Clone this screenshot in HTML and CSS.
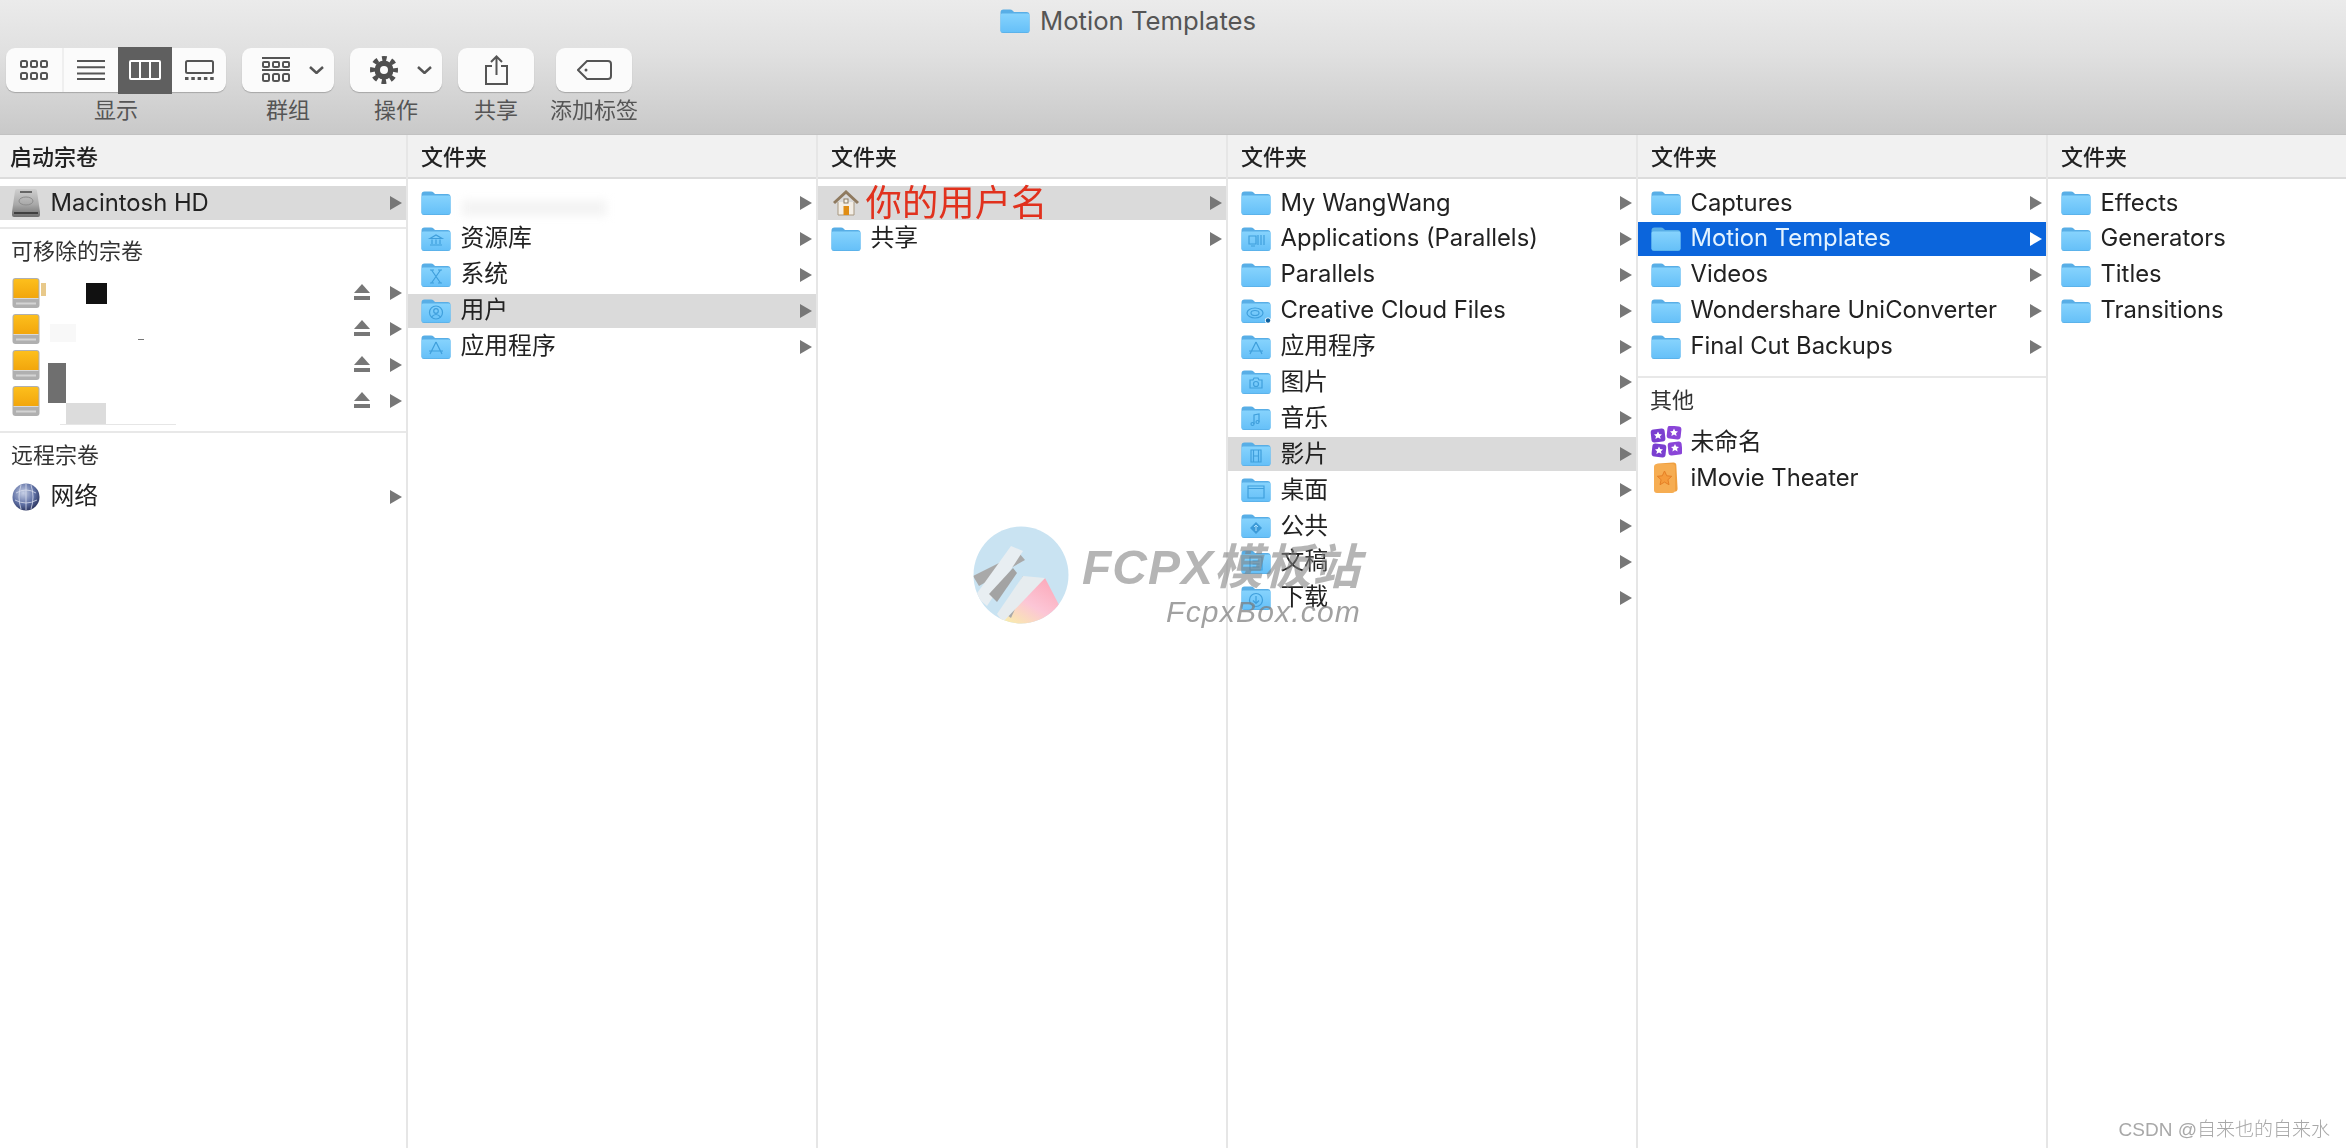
FILE: index.html
```html
<!DOCTYPE html>
<html lang="zh-CN">
<head>
<meta charset="utf-8">
<title>Motion Templates</title>
<link rel="stylesheet" href="styles.css">
</head>
<body>
<svg class="defs" width="0" height="0" aria-hidden="true">
  <defs>
    <linearGradient id="fg" x1="0" y1="0" x2="0" y2="1"><stop offset="0" stop-color="#86d3fd"/><stop offset="1" stop-color="#66c0f8"/></linearGradient>
    <linearGradient id="dg" x1="0" y1="0" x2="0" y2="1"><stop offset="0" stop-color="#fdbf1c"/><stop offset="1" stop-color="#f2a60c"/></linearGradient>
    <linearGradient id="hg" x1="0" y1="0" x2="0" y2="1"><stop offset="0" stop-color="#cfcfcf"/><stop offset=".55" stop-color="#a9a9a9"/><stop offset="1" stop-color="#6d6d6d"/></linearGradient>
    <linearGradient id="wg" x1="1" y1="0" x2="0" y2="1"><stop offset="0" stop-color="#fb9fb0"/><stop offset=".55" stop-color="#fcc6d6"/><stop offset="1" stop-color="#f8f6a0"/></linearGradient>
    <radialGradient id="gl" cx=".4" cy=".35" r=".7"><stop offset="0" stop-color="#c6cfe6"/><stop offset=".6" stop-color="#5f70a4"/><stop offset="1" stop-color="#27305a"/></radialGradient>
    <symbol id="folder" viewBox="0 0 30 24">
      <path d="M.5 3.5Q.5.5 3.5.5H10q1.600 0 2.800 1.300L14 3H26.500Q29.500 3 29.500 6V21.500Q29.500 24 27 24H3Q.5 24 .5 21.500Z" fill="#58aee6"/>
      <path d="M.5 6Q.5 4.500 2 4.500H28Q29.500 4.500 29.500 6V21.200Q29.500 23.200 27.500 23.200H2.500Q.5 23.200.5 21.200Z" fill="url(#fg)"/>
    </symbol>
    <symbol id="arrow" viewBox="0 0 12 14"><path d="M0 0L12 7L0 14Z"/></symbol>
    <symbol id="eject" viewBox="0 0 16 18"><path d="M8 0L16 9H0Z"/><rect y="12" width="16" height="4"/></symbol>
    <symbol id="drive" viewBox="0 0 28 30">
      <path d="M.5 3Q.5 0 3.500 0H24.500Q27.500 0 27.500 3V27Q27.500 30 24.500 30H3.500Q.5 30 .5 27Z" fill="#b0b0b0"/>
      <path d="M1.500 3Q1.500 1 3.500 1H24.500Q26.500 1 26.500 3V20H1.500Z" fill="url(#dg)"/>
      <path d="M1.500 20H26.500V21H1.500Z" fill="#d9d9d9"/>
      <path d="M4 25.500H24" stroke="#d4d4d4" stroke-width="2"/>
    </symbol>
  </defs>
</svg>

<div class="window">
  <header class="toolbar">
    <div class="title">
      <svg class="ico-folder"><use href="#folder"/></svg>
      <span>Motion Templates</span>
    </div>
    <div class="tools">
      <div class="tool">
        <div class="seg-group">
          <span class="seg">
            <svg width="28" height="20" viewBox="0 0 28 20" fill="none" stroke="#555" stroke-width="2"><rect x="1" y="1" width="6" height="6" rx="1.500"/><rect x="11" y="1" width="6" height="6" rx="1.500"/><rect x="21" y="1" width="6" height="6" rx="1.500"/><rect x="1" y="13" width="6" height="6" rx="1.500"/><rect x="11" y="13" width="6" height="6" rx="1.500"/><rect x="21" y="13" width="6" height="6" rx="1.500"/></svg>
          </span>
          <span class="seg">
            <svg width="28" height="20" viewBox="0 0 28 20" fill="none" stroke="#555" stroke-width="2"><path d="M0 1H28M0 7.300H28M0 13.600H28M0 19H28"/></svg>
          </span>
          <span class="seg seg-active">
            <svg width="32" height="20" viewBox="0 0 32 20" fill="none" stroke="#fff" stroke-width="2"><rect x="1" y="1" width="30" height="18" rx="1"/><path d="M11 1V19M21 1V19"/></svg>
          </span>
          <span class="seg">
            <svg width="29" height="20" viewBox="0 0 29 20" fill="none" stroke="#555" stroke-width="2"><rect x="1" y="1" width="27" height="12" rx="1.500"/><path d="M0 18.500H29" stroke-width="3" stroke-dasharray="3.500 2.800"/></svg>
          </span>
        </div>
        <span class="tool-label">显示</span>
      </div>
      <div class="tool">
        <div class="btn btn-menu">
          <svg width="28" height="26" viewBox="0 0 28 26" fill="none" stroke="#555" stroke-width="2"><path d="M0 1H28M0 13H28"/><rect x="1" y="5" width="6" height="5" rx="1"/><rect x="11" y="5" width="6" height="5" rx="1"/><rect x="21" y="5" width="6" height="5" rx="1"/><rect x="1" y="17" width="6" height="7" rx="1.500"/><rect x="11" y="17" width="6" height="7" rx="1.500"/><rect x="21" y="17" width="6" height="7" rx="1.500"/></svg>
          <svg width="15" height="8" viewBox="0 0 15 8" fill="none" stroke="#555" stroke-width="2.500"><path d="M1 1L7.500 7L14 1"/></svg>
        </div>
        <span class="tool-label">群组</span>
      </div>
      <div class="tool">
        <div class="btn btn-menu">
          <svg width="28" height="28" viewBox="0 0 28 28"><circle cx="14" cy="14" r="9.500" fill="#4f4f4f"/><circle cx="14" cy="14" r="11.500" fill="none" stroke="#4f4f4f" stroke-width="5" stroke-dasharray="4.600 4.430" stroke-dashoffset="2.300"/><circle cx="14" cy="14" r="4" fill="#fbfbfb"/></svg>
          <svg width="15" height="8" viewBox="0 0 15 8" fill="none" stroke="#555" stroke-width="2.500"><path d="M1 1L7.500 7L14 1"/></svg>
        </div>
        <span class="tool-label">操作</span>
      </div>
      <div class="tool">
        <div class="btn btn-single">
          <svg width="23" height="30" viewBox="0 0 23 30" fill="none" stroke="#555" stroke-width="2"><path d="M7 11H1V29H22V11H16M11.500 20V1.500M6 7L11.500 1.500L17 7"/></svg>
        </div>
        <span class="tool-label">共享</span>
      </div>
      <div class="tool">
        <div class="btn btn-single">
          <svg width="35" height="20" viewBox="0 0 35 20" fill="none" stroke="#555" stroke-width="2"><path d="M10 1H31Q34 1 34 4V16Q34 19 31 19H10L1 10Z"/><circle cx="9" cy="10" r="1.500" fill="#555" stroke="none"/></svg>
        </div>
        <span class="tool-label">添加标签</span>
      </div>
    </div>
  </header>

  <main class="columns">
    <section class="col col-first">
      <div class="col-head">启动宗卷</div>
      <div class="col-body">
        <div class="group group-top">
          <div class="row row-sel">
            <svg class="ico" width="28" height="28" viewBox="0 0 28 28"><path d="M3 2Q3 0 5 0H23Q25 0 25 2L28 23V26Q28 28 26 28H2Q0 28 0 26V23Z" fill="url(#hg)"/><rect x="8" y="2" width="12" height="2" fill="#666"/><ellipse cx="14" cy="12" rx="7" ry="4" fill="none" stroke="#8c8c8c"/><path d="M2 24H26" stroke="#3f3f3f" stroke-width="2"/></svg>
            <span class="name">Macintosh HD</span>
            <svg class="arrow"><use href="#arrow"/></svg>
          </div>
        </div>
        <div class="group group-rule">
          <h3 class="group-title">可移除的宗卷</h3>
          <div class="row row-fixed">
            <svg class="ico drive"><use href="#drive"/></svg>
            <span class="name"></span>
            <i class="mask mask-tag"></i><i class="mask mask-black"></i>
            <svg class="eject"><use href="#eject"/></svg>
            <svg class="arrow"><use href="#arrow"/></svg>
          </div>
          <div class="row row-fixed">
            <svg class="ico drive"><use href="#drive"/></svg>
            <span class="name"></span>
            <i class="mask mask-faint"></i><i class="mask mask-dash"></i>
            <svg class="eject"><use href="#eject"/></svg>
            <svg class="arrow"><use href="#arrow"/></svg>
          </div>
          <div class="row row-fixed">
            <svg class="ico drive"><use href="#drive"/></svg>
            <span class="name"></span>
            <i class="mask mask-grey"></i>
            <svg class="eject"><use href="#eject"/></svg>
            <svg class="arrow"><use href="#arrow"/></svg>
          </div>
          <div class="row row-fixed">
            <svg class="ico drive"><use href="#drive"/></svg>
            <span class="name"></span>
            <i class="mask mask-light"></i><i class="mask mask-line"></i>
            <svg class="eject"><use href="#eject"/></svg>
            <svg class="arrow"><use href="#arrow"/></svg>
          </div>
        </div>
        <div class="group group-rule group-last">
          <h3 class="group-title">远程宗卷</h3>
          <div class="row">
            <svg class="ico" width="28" height="28" viewBox="0 0 28 28"><circle cx="14" cy="14" r="13.500" fill="url(#gl)"/><path d="M4 10Q14 4 24 10M3 17Q14 23 25 17M14 1V27M9 2Q5 14 9 26M19 2Q23 14 19 26" fill="none" stroke="#d7dcec" stroke-width=".8"/></svg>
            <span class="name">网络</span>
            <svg class="arrow"><use href="#arrow"/></svg>
          </div>
        </div>
      </div>
    </section>

    <section class="col">
      <div class="col-head">文件夹</div>
      <div class="col-body">
        <div class="row">
          <svg class="ico-folder"><use href="#folder"/></svg>
          <span class="name"></span>
          <i class="mask mask-smudge"></i>
          <svg class="arrow"><use href="#arrow"/></svg>
        </div>
        <div class="row">
          <svg class="ico-folder" viewBox="0 0 30 24"><use href="#folder"/><g class="glyph"><path d="M9 11.500L15 8L21 11.500ZM11 12.500V17M15 12.500V17M19 12.500V17M9 18H21"/></g></svg>
          <span class="name">资源库</span>
          <svg class="arrow"><use href="#arrow"/></svg>
        </div>
        <div class="row">
          <svg class="ico-folder" viewBox="0 0 30 24"><use href="#folder"/><g class="glyph"><path d="M10.500 7L19.500 20M19.500 7L10.500 20M9 7H13M17 7H21M9 20H13M17 20H21"/></g></svg>
          <span class="name">系统</span>
          <svg class="arrow"><use href="#arrow"/></svg>
        </div>
        <div class="row row-sel">
          <svg class="ico-folder" viewBox="0 0 30 24"><use href="#folder"/><g class="glyph"><circle cx="15" cy="13.500" r="6.500"/><circle cx="15" cy="12" r="2.300"/><path d="M10.500 18Q15 13 19.500 18"/></g></svg>
          <span class="name">用户</span>
          <svg class="arrow"><use href="#arrow"/></svg>
        </div>
        <div class="row">
          <svg class="ico-folder" viewBox="0 0 30 24"><use href="#folder"/><g class="glyph"><path d="M15 7L21 19M15 7L9 19M8 16H22"/></g></svg>
          <span class="name">应用程序</span>
          <svg class="arrow"><use href="#arrow"/></svg>
        </div>
      </div>
    </section>

    <section class="col">
      <div class="col-head">文件夹</div>
      <div class="col-body">
        <div class="row row-sel">
          <svg class="ico-home" width="26" height="26" viewBox="0 0 26 26"><path d="M5 12V25H21V12" fill="#f3eee6" stroke="#a89880"/><path d="M1 13L13 2L25 13" fill="none" stroke="#8f7a5f" stroke-width="3"/><rect x="10.500" y="16" width="5.500" height="9" fill="#e08d14"/><rect x="11" y="9" width="4" height="4" fill="#f6f1e8" stroke="#8a7a62"/></svg>
          <span class="name name-red">你的用户名</span>
          <svg class="arrow"><use href="#arrow"/></svg>
        </div>
        <div class="row">
          <svg class="ico-folder"><use href="#folder"/></svg>
          <span class="name">共享</span>
          <svg class="arrow"><use href="#arrow"/></svg>
        </div>
      </div>
    </section>

    <section class="col">
      <div class="col-head">文件夹</div>
      <div class="col-body">
        <div class="row">
          <svg class="ico-folder"><use href="#folder"/></svg>
          <span class="name">My WangWang</span>
          <svg class="arrow"><use href="#arrow"/></svg>
        </div>
        <div class="row">
          <svg class="ico-folder" viewBox="0 0 30 24"><use href="#folder"/><g class="glyph"><path d="M8 9H15V17H8ZM17 8V18M20 8V18M23 8V18M10 19H14"/></g></svg>
          <span class="name">Applications (Parallels)</span>
          <svg class="arrow"><use href="#arrow"/></svg>
        </div>
        <div class="row">
          <svg class="ico-folder"><use href="#folder"/></svg>
          <span class="name">Parallels</span>
          <svg class="arrow"><use href="#arrow"/></svg>
        </div>
        <div class="row">
          <svg class="ico-folder" viewBox="0 0 30 24"><use href="#folder"/><g class="glyph"><ellipse cx="14" cy="14" rx="8" ry="5"/><ellipse cx="14" cy="14" rx="4" ry="2.500"/></g><circle cx="27" cy="21.500" r="3" fill="#fff"/><circle cx="27" cy="21.500" r="2.200" fill="#0c5f9e"/></svg>
          <span class="name">Creative Cloud Files</span>
          <svg class="arrow"><use href="#arrow"/></svg>
        </div>
        <div class="row">
          <svg class="ico-folder" viewBox="0 0 30 24"><use href="#folder"/><g class="glyph"><path d="M15 7L21 19M15 7L9 19M8 16H22"/></g></svg>
          <span class="name">应用程序</span>
          <svg class="arrow"><use href="#arrow"/></svg>
        </div>
        <div class="row">
          <svg class="ico-folder" viewBox="0 0 30 24"><use href="#folder"/><g class="glyph"><path d="M9 10H12L13 8H17L18 10H21V18H9Z"/><circle cx="15" cy="14" r="2.500"/></g></svg>
          <span class="name">图片</span>
          <svg class="arrow"><use href="#arrow"/></svg>
        </div>
        <div class="row">
          <svg class="ico-folder" viewBox="0 0 30 24"><use href="#folder"/><g class="glyph"><path d="M13 18V9L18 8V16"/><circle cx="11.500" cy="18" r="1.500"/><circle cx="16.500" cy="16" r="1.500"/></g></svg>
          <span class="name">音乐</span>
          <svg class="arrow"><use href="#arrow"/></svg>
        </div>
        <div class="row row-sel">
          <svg class="ico-folder" viewBox="0 0 30 24"><use href="#folder"/><g class="glyph"><path d="M10 8H20V20H10ZM12.500 8V20M17.500 8V20M12.500 14H17.500"/></g></svg>
          <span class="name">影片</span>
          <svg class="arrow"><use href="#arrow"/></svg>
        </div>
        <div class="row">
          <svg class="ico-folder" viewBox="0 0 30 24"><use href="#folder"/><g class="glyph"><path d="M7 8H23V20H7ZM7 10.500H23"/></g></svg>
          <span class="name">桌面</span>
          <svg class="arrow"><use href="#arrow"/></svg>
        </div>
        <div class="row">
          <svg class="ico-folder" viewBox="0 0 30 24"><use href="#folder"/><path d="M15 8L21 14L15 20L9 14Z" fill="#3c9ad8"/><path d="M15 11V17M13 13L15 11L17 13" fill="none" stroke="#a8defc"/></svg>
          <span class="name">公共</span>
          <svg class="arrow"><use href="#arrow"/></svg>
        </div>
        <div class="row">
          <svg class="ico-folder" viewBox="0 0 30 24"><use href="#folder"/><g class="glyph"><path d="M9 7H21V20H9ZM11.500 11H18.500M11.500 14H18.500M11.500 17H18.500"/></g></svg>
          <span class="name">文稿</span>
          <svg class="arrow"><use href="#arrow"/></svg>
        </div>
        <div class="row">
          <svg class="ico-folder" viewBox="0 0 30 24"><use href="#folder"/><g class="glyph"><circle cx="15" cy="14" r="6.500"/><path d="M15 10V17M12 14.500L15 17.500L18 14.500"/></g></svg>
          <span class="name">下载</span>
          <svg class="arrow"><use href="#arrow"/></svg>
        </div>
      </div>
    </section>

    <section class="col">
      <div class="col-head">文件夹</div>
      <div class="col-body">
        <div class="group group-top-end">
          <div class="row">
            <svg class="ico-folder"><use href="#folder"/></svg>
            <span class="name">Captures</span>
            <svg class="arrow"><use href="#arrow"/></svg>
          </div>
          <div class="row row-active">
            <svg class="ico-folder"><use href="#folder"/></svg>
            <span class="name">Motion Templates</span>
            <svg class="arrow"><use href="#arrow"/></svg>
          </div>
          <div class="row">
            <svg class="ico-folder"><use href="#folder"/></svg>
            <span class="name">Videos</span>
            <svg class="arrow"><use href="#arrow"/></svg>
          </div>
          <div class="row">
            <svg class="ico-folder"><use href="#folder"/></svg>
            <span class="name">Wondershare UniConverter</span>
            <svg class="arrow"><use href="#arrow"/></svg>
          </div>
          <div class="row">
            <svg class="ico-folder"><use href="#folder"/></svg>
            <span class="name">Final Cut Backups</span>
            <svg class="arrow"><use href="#arrow"/></svg>
          </div>
        </div>
        <div class="group group-rule group-last">
          <h3 class="group-title">其他</h3>
          <div class="row row-fixed">
            <svg class="ico-wide" width="32" height="32" viewBox="0 0 32 32">
              <rect x="1" y="3" width="14" height="13" rx="3" fill="#7a3fd0" transform="rotate(-6 8 9)"/>
              <rect x="17" y="0" width="14" height="13" rx="3" fill="#8a45d8" transform="rotate(6 24 7)"/>
              <rect x="2" y="18" width="14" height="13" rx="3" fill="#7a3fd0" transform="rotate(6 9 24)"/>
              <rect x="18" y="16" width="14" height="13" rx="3" fill="#8a45d8" transform="rotate(-6 25 22)"/>
              <path d="M8 5.500l1.200 2.600 2.800.3-2 1.900.6 2.700-2.600-1.400-2.600 1.400.6-2.700-2-1.900 2.800-.3Z" fill="#fff"/>
              <path d="M24 2.500l1.200 2.600 2.800.3-2 1.900.6 2.700-2.600-1.400-2.600 1.400.6-2.700-2-1.900 2.800-.3Z" fill="#fff"/>
              <path d="M9 20.500l1.200 2.600 2.800.3-2 1.900.6 2.700-2.600-1.400-2.600 1.400.6-2.700-2-1.900 2.800-.3Z" fill="#fff"/>
              <path d="M25 18l1.200 2.600 2.800.3-2 1.900.6 2.700-2.600-1.400-2.600 1.400.6-2.700-2-1.900 2.800-.3Z" fill="#fff"/>
            </svg>
            <span class="name">未命名</span>
          </div>
          <div class="row">
            <svg class="ico-wide" width="32" height="32" viewBox="0 0 32 32">
              <rect x="6" y="1" width="21" height="29" rx="3" fill="#f0a040" transform="rotate(-3 16 16)"/>
              <rect x="4" y="2" width="21" height="29" rx="3" fill="#f6ad52"/>
              <path d="M14.500 9l2.200 4.800 5 .5-3.800 3.400 1.100 5-4.500-2.600-4.500 2.600 1.100-5-3.800-3.400 5-.5Z" fill="#f59b3b" stroke="#e57f25"/>
            </svg>
            <span class="name">iMovie Theater</span>
          </div>
        </div>
      </div>
    </section>

    <section class="col col-end">
      <div class="col-head">文件夹</div>
      <div class="col-body">
        <div class="row"><svg class="ico-folder"><use href="#folder"/></svg><span class="name">Effects</span></div>
        <div class="row"><svg class="ico-folder"><use href="#folder"/></svg><span class="name">Generators</span></div>
        <div class="row"><svg class="ico-folder"><use href="#folder"/></svg><span class="name">Titles</span></div>
        <div class="row"><svg class="ico-folder"><use href="#folder"/></svg><span class="name">Transitions</span></div>
      </div>
    </section>
  </main>

  <div class="watermark">
    <svg class="wm-logo" width="96" height="98" viewBox="0 0 96 98">
      <defs><clipPath id="wc"><ellipse cx="48" cy="49" rx="47.500" ry="48.500"/></clipPath></defs>
      <g clip-path="url(#wc)">
        <rect width="96" height="98" fill="#c9e3f2"/>
        <path d="M72 52L96 98H22Z" fill="url(#wg)"/>
        <path d="M0 50L46 27L52 34L6 60Z" fill="#a9a9a9"/>
        <path d="M38 20L50 25L14 80L2 70Z" fill="#e8eef2"/>
        <path d="M16 68L40 42L44 47L24 76Z" fill="#a3a3a3"/>
        <path d="M30 86L50 50L54 56L38 92Z" fill="#a9a9a9"/>
        <path d="M50 50L72 52L30 96L24 88Z" fill="#e6ecef"/>
      </g>
    </svg>
    <div class="wm-text">
      <span class="wm-main">FCPX模板站</span>
      <span class="wm-sub">FcpxBox.com</span>
    </div>
  </div>
  <div class="credit">CSDN @自来也的自来水</div>
</div>
</body>
</html>
```
FILE: styles.css
```css
* { box-sizing: border-box; }
html, body { margin: 0; height: 100%; }
body {
  background: #fff;
  overflow: hidden;
  font-family: "Inter", "Noto Sans CJK SC", "Liberation Sans", sans-serif;
  color: #222;
}
.defs { position: absolute; }
.window {
  position: relative;
  display: flex;
  flex-direction: column;
  height: 1148px;
  filter: blur(.45px);
}

/* toolbar */
.toolbar {
  height: 135px;
  flex: none;
  padding-left: 6px;
  background: linear-gradient(#ebebeb, #e0e0e0 40%, #c9c9c9);
  border-bottom: 1px solid #c2c2c2;
}
.title {
  height: 47px;
  display: flex;
  align-items: center;
  justify-content: center;
  gap: 10px;
  padding-right: 96px;
  padding-bottom: 6px;
  font-size: 25.700px;
  color: #555;
}
.ico-folder { width: 30px; height: 24px; flex: none; }
.tools { display: flex; gap: 16px; align-items: flex-start; }
.tool { display: flex; flex-direction: column; align-items: center; gap: 2px; }
.tool-label {
  font-size: 22px;
  line-height: 32px;
  color: #555;
  white-space: nowrap;
}
.seg-group, .btn {
  height: 44px;
  margin-top: 1px;
  display: flex;
  align-items: center;
  background: #fbfbfb;
  border-radius: 9px;
  box-shadow: 0 1px 1px rgba(0,0,0,.22);
}
.seg {
  width: 54px;
  height: 44px;
  display: flex;
  align-items: center;
  justify-content: center;
}
.seg:first-child { width: 58px; border-right: 2px solid #efefef; }
.seg-active {
  height: 47px;
  background: #5f5f5f;
}
.seg:last-child { border-radius: 0 9px 9px 0; }
.btn-menu { width: 92px; justify-content: space-between; padding: 0 10px 0 20px; }
.btn-single { width: 76px; justify-content: center; }

/* columns */
.columns { flex: 1; display: flex; min-height: 0; }
.col {
  width: 410px;
  flex: none;
  border-right: 2px solid #e6e6e6;
  display: flex;
  flex-direction: column;
}
.col-first { width: 408px; }
.col-end { flex: 1; border-right: 0; }
.col-head {
  height: 44px;
  flex: none;
  display: flex;
  align-items: center;
  padding: 0 0 3px 13px;
  font-size: 22px;
  font-weight: 500;
  color: #222;
  background: #f1f1f1;
  border-bottom: 2px solid #dcdcdc;
}
.col-first .col-head { padding-left: 10px; }
.col-body { padding-top: 7px; flex: 1; }

/* rows */
.row {
  position: relative;
  height: 34px;
  margin-bottom: 1.900px;
  display: flex;
  align-items: center;
  gap: 9.500px;
  padding: 0 4px 0 13px;
  font-size: 23.800px;
  white-space: nowrap;
}
.row-fixed { margin-bottom: 2px; }
.col-first .row { padding-left: 12px; gap: 10.500px; }
.row-sel { background: #dadada; }
.row-active { background: #0b65dc; color: #e4f3ff; }
.row-active .arrow { fill: #fff; }
.name { flex: 1; min-width: 0; padding-bottom: 1px; line-height: 34px; }
.name-red {
  margin-left: -5px;
  padding-bottom: 0;
  font-size: 36.400px;
  font-weight: 400;
  line-height: 34px;
  color: #e1311d;
}
.ico { flex: none; }
.drive { width: 28px; height: 30px; }
.ico-home { flex: none; margin: 0 2px; }
.ico-wide { flex: none; margin: 0 -1px; }
.arrow { width: 12px; height: 14px; flex: none; fill: #777; }
.eject { width: 16px; height: 18px; flex: none; fill: #777; margin-right: 10px; }
.glyph { fill: none; stroke: #3f9fdc; stroke-width: 1.200; }

/* groups */
.group-top { padding-bottom: 5px; }
.group-top-end { padding-bottom: 11px; }
.group-rule { border-top: 2px solid #e8e8e8; padding-top: 4px; padding-bottom: 11px; }
.group-last { padding-bottom: 0; }
.group-title {
  height: 34px;
  margin: 0 0 9px;
  padding: 0 0 2px 12px;
  display: flex;
  align-items: center;
  font-size: 22px;
  font-weight: 400;
  color: #333;
}
.col-first .group-title { padding-left: 11px; }

/* redaction marks that cover drive names */
.mask { position: absolute; display: block; }
.mask-tag { left: 41px; top: 7px; width: 5px; height: 13px; background: #e8c98a; }
.mask-black { left: 86px; top: 7px; width: 21px; height: 21px; background: #111; }
.mask-faint { left: 50px; top: 12px; width: 26px; height: 18px; background: #f8f8f8; }
.mask-dash { left: 138px; top: 27px; width: 6px; height: 1px; background: #777; }
.mask-grey { left: 48px; top: 15px; width: 18px; height: 40px; background: #6f6f6f; z-index: 1; }
.mask-light { left: 66px; top: 19px; width: 40px; height: 22px; background: #dcdcdc; }
.mask-line { left: 60px; top: 40px; width: 116px; height: 1px; background: #e6e6e6; }
.mask-smudge { left: 54px; top: 14px; width: 145px; height: 16px; background: #f4f4f4; filter: blur(4px); }

/* watermark */
.watermark {
  position: absolute;
  left: 973px;
  top: 526px;
  display: flex;
  gap: 13px;
  pointer-events: none;
}
.wm-logo { flex: none; }
.wm-text { display: flex; flex-direction: column; align-items: flex-end; padding-top: 18px; }
.wm-main {
  font-family: "Liberation Sans", "Noto Sans CJK SC", sans-serif;
  font-size: 48px;
  line-height: 48px;
  font-weight: 700;
  font-style: italic;
  color: rgba(128,128,128,.58);
  letter-spacing: 1px;
  white-space: nowrap;
}
.wm-sub {
  font-family: "Liberation Sans", sans-serif;
  font-size: 30px;
  line-height: 30px;
  font-style: italic;
  letter-spacing: 1.200px;
  margin-right: 0;
  margin-top: 5px;
  color: rgba(125,125,125,.72);
}
.credit {
  position: absolute;
  right: 16px;
  bottom: 5px;
  font-family: "Liberation Sans", "Noto Sans CJK SC", sans-serif;
  font-size: 19px;
  line-height: 26px;
  color: #a8a8a8;
  font-weight: 300;
  white-space: nowrap;
}
```
